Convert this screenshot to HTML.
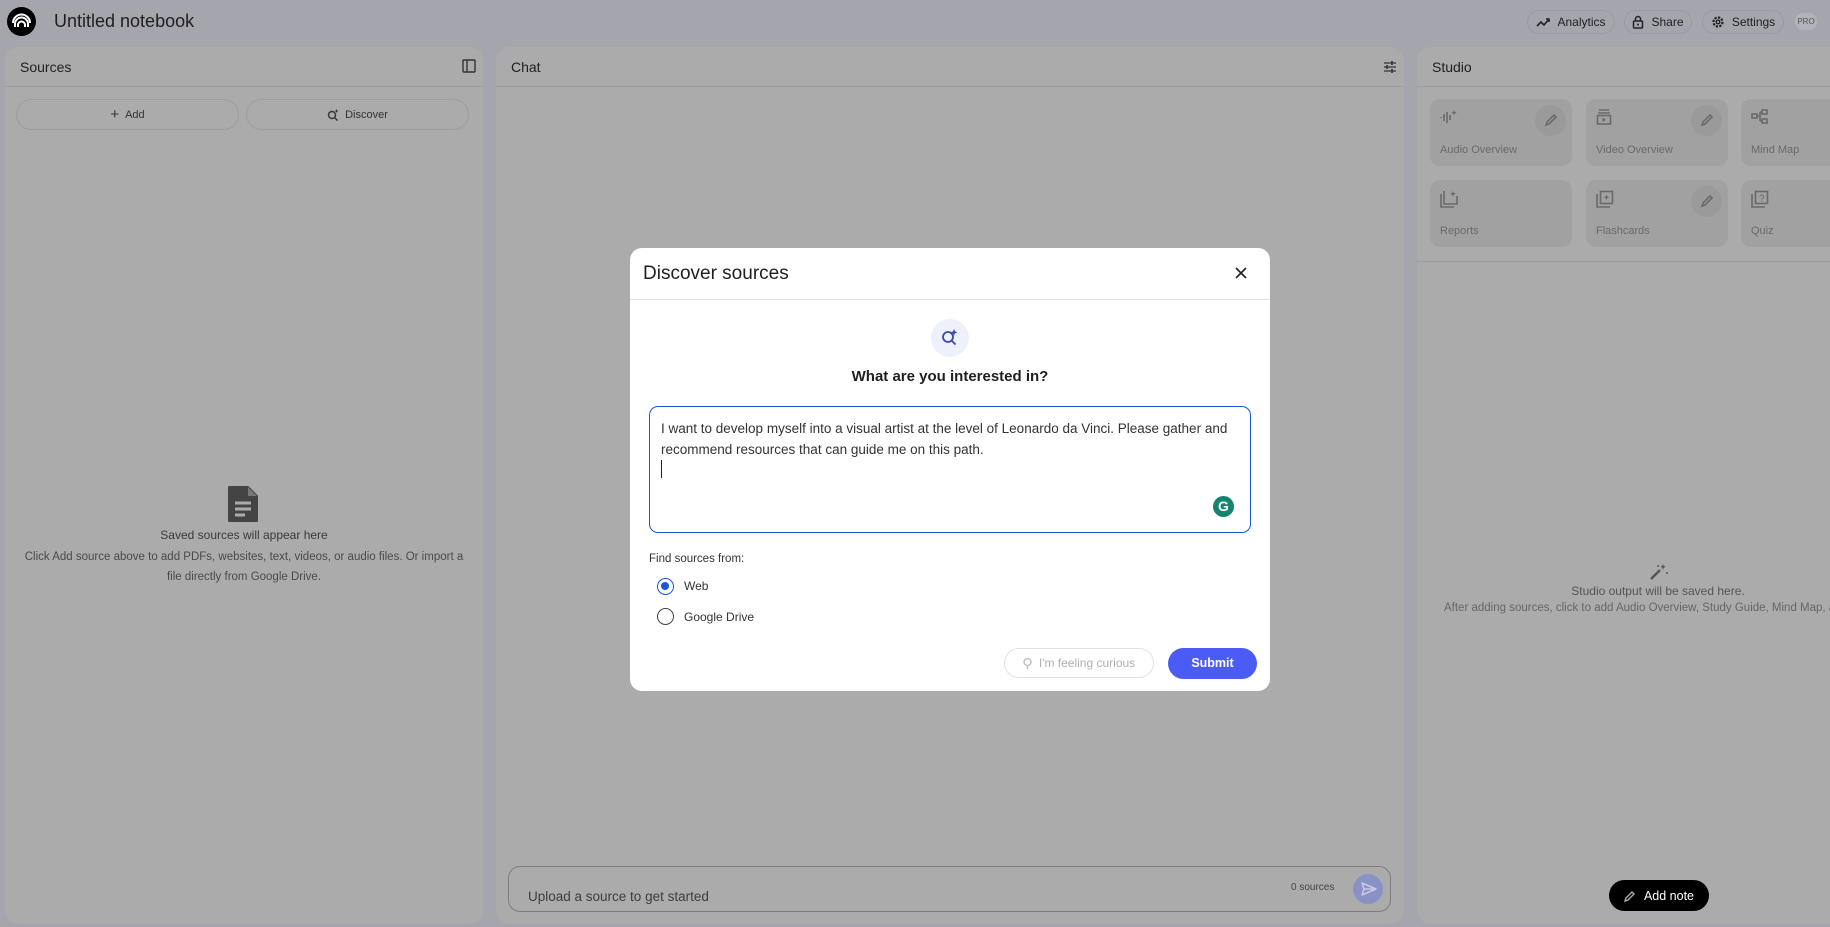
<!DOCTYPE html>
<html><head><meta charset="utf-8"><style>
*{box-sizing:border-box;margin:0;padding:0}
body{width:1830px;height:927px;background:#a5a5ae;font-family:"Liberation Sans",Arial,sans-serif;position:relative;overflow:hidden;color:#1f1f1f}
.abs{position:absolute}
.panel{position:absolute;top:47px;bottom:3px;background:#ababab;border-radius:14px}
.ph{position:absolute;left:0;right:0;top:0;height:40px;border-bottom:1px solid #9c9ca6;font-size:14px;padding:12px 0 0 15px;color:#1f1f1f}
.hbtn{position:absolute;top:10px;height:24px;border:1px solid #9a9aa3;border-radius:12px;font-size:12px;display:flex;align-items:center;justify-content:center;gap:7px;color:#1f1f1f}
.sbtn{position:absolute;top:52px;height:31px;border:1px solid #9e9e9e;border-radius:16px;font-size:11px;display:flex;align-items:center;justify-content:center;gap:6px;color:#333}
.tile{position:absolute;width:142px;height:67px;background:#a1a1a1;border-radius:10px}
.tile .lbl{position:absolute;left:10px;bottom:10px;font-size:11px;color:#6a6a6a}
.tile .ic{position:absolute;left:10px;top:10px}
.tile .pen{position:absolute;right:6px;top:6px;width:31px;height:31px;border-radius:50%;background:#9a9a9a}
.grey{fill:none;stroke:#6a6a6a;stroke-width:1.6}
</style></head><body>
<div class="abs" style="left:7px;top:7px;width:29px;height:29px;border-radius:50%;background:#000">
<svg width="29" height="29" viewBox="0 0 29 29"><g fill="none" stroke="#fff" stroke-width="2"><path d="M8 20v-3a6.5 6.5 0 0 1 13 0v3"/><path d="M6 16a8.5 8.5 0 0 1 17 0"/><path d="M11 20v-2a3.5 3.5 0 0 1 7 0v2"/></g></svg></div>
<div class="abs" style="left:54px;top:11px;font-size:18px;color:#1f1f1f">Untitled notebook</div>
<div class="hbtn" style="left:1527px;width:88px"><svg width="14" height="10"><path d="M1 9l4-4 3 3 5-6M10 2h3v3" fill="none" stroke="#222" stroke-width="1.6"/></svg>Analytics</div>
<div class="hbtn" style="left:1624px;width:68px"><svg width="12" height="14"><rect x="1.5" y="6" width="9" height="7" rx="1" fill="none" stroke="#222" stroke-width="1.5"/><path d="M3.5 6V4a2.5 2.5 0 0 1 5 0v2" fill="none" stroke="#222" stroke-width="1.5"/><circle cx="6" cy="9.5" r="1" fill="#222"/></svg>Share</div>
<div class="hbtn" style="left:1702px;width:82px"><svg width="14" height="14"><circle cx="7" cy="7" r="4.5" fill="none" stroke="#222" stroke-width="2.2" stroke-dasharray="2.2 1.3"/><circle cx="7" cy="7" r="1.8" fill="none" stroke="#222" stroke-width="1.4"/></svg>Settings</div>
<div class="abs" style="left:1795px;top:13px;width:22px;height:17px;border-radius:8px;background:#b2b2ba;font-size:8px;color:#555;text-align:center;line-height:17px">PRO</div>

<div class="panel" style="left:5px;width:478px">
<div class="ph">Sources</div>
<svg class="abs" style="left:457px;top:12px" width="14" height="14"><rect x="1" y="1" width="12" height="12" rx="1" fill="none" stroke="#333" stroke-width="1.4"/><path d="M5 1v12" stroke="#333" stroke-width="1.4"/></svg>
<div class="sbtn" style="left:11px;width:223px"><span style="font-size:15px">+</span>Add</div>
<div class="sbtn" style="left:241px;width:223px"><svg width="12" height="12"><circle cx="5" cy="6" r="3.5" fill="none" stroke="#333" stroke-width="1.4"/><path d="M7.5 8.5l3 3" stroke="#333" stroke-width="1.4"/><path d="M9.5 0l.6 1.4 1.4.6-1.4.6-.6 1.4-.6-1.4-1.4-.6 1.4-.6z" fill="#333"/></svg>Discover</div>
<svg class="abs" style="left:222px;top:438px" width="32" height="38"><path d="M2 2h19l9 9v25H2z" fill="#444" stroke="#444" stroke-width="2" stroke-linejoin="round"/><path d="M21 2v9h9" fill="#777"/><path d="M8 18h16M8 24h16M8 30h10" stroke="#ababab" stroke-width="3"/></svg>
<div class="abs" style="left:0;right:0;top:481px;text-align:center;font-size:12px;color:#3a3a3a">Saved sources will appear here</div>
<div class="abs" style="left:14px;right:14px;top:500px;text-align:center;font-size:11.5px;color:#4a4a4a;line-height:20px">Click Add source above to add PDFs, websites, text, videos, or audio files. Or import a file directly from Google Drive.</div>
</div>

<div class="panel" style="left:496px;width:908px">
<div class="ph">Chat</div>
<svg class="abs" style="left:887px;top:13px" width="14" height="14"><path d="M1 3h12M1 7h12M1 11h12" stroke="#333" stroke-width="1.3"/><path d="M9 1v4M4 5v4M9 9v4" stroke="#333" stroke-width="1.6"/></svg>
<div class="abs" style="left:12px;top:819px;width:883px;height:46px;border:1px solid #7d7d7d;border-radius:12px">
<div class="abs" style="left:19px;top:22px;font-size:13.5px;color:#3d3d3d">Upload a source to get started</div>
<div class="abs" style="left:782px;top:15px;font-size:10px;color:#444">0 sources</div>
<div class="abs" style="left:844px;top:7px;width:30px;height:30px;border-radius:50%;background:#8a91c4"><svg width="30" height="30"><path d="M9 9l14 6-14 6 2-6z" fill="none" stroke="#c9cbe6" stroke-width="1.5" stroke-linejoin="round"/><path d="M11 15h12" stroke="#c9cbe6" stroke-width="1.5"/></svg></div>
</div>
</div>

<div class="panel" style="left:1417px;width:440px">
<div class="ph">Studio</div>
<div class="tile" style="left:13px;top:52px"><svg class="ic" width="18" height="16"><path d="M1 8v1M4 5v7M7 3v11M10 6v5" stroke="#6a6a6a" stroke-width="1.6"/><path d="M14 1l.8 2 2 .8-2 .8-.8 2-.8-2-2-.8 2-.8z" fill="#6a6a6a"/></svg><div class="pen"><svg width="31" height="31"><path d="M11 20l1-3 7-7 2 2-7 7z" class="grey"/></svg></div><div class="lbl">Audio Overview</div></div>
<div class="tile" style="left:169px;top:52px"><svg class="ic" width="16" height="16"><path d="M3 1h10M2 4h12" class="grey"/><rect x="1.5" y="6.5" width="13" height="8.5" class="grey"/><path d="M6.5 8.5v4.5l3.5-2.2z" fill="#6a6a6a"/></svg><div class="pen"><svg width="31" height="31"><path d="M11 20l1-3 7-7 2 2-7 7z" class="grey"/></svg></div><div class="lbl">Video Overview</div></div>
<div class="tile" style="left:324px;top:52px"><svg class="ic" width="18" height="16"><rect x="1" y="5" width="5" height="4" class="grey"/><rect x="11" y="1" width="5" height="4" class="grey"/><rect x="11" y="10" width="5" height="4" class="grey"/><path d="M6 7h3M9 3v9M9 3h2M9 12h2" class="grey"/></svg><div class="lbl">Mind Map</div></div>
<div class="tile" style="left:13px;top:133px"><svg class="ic" width="18" height="18"><path d="M1 4v13h13" class="grey"/><path d="M4 1v13h13V6" class="grey"/><path d="M13 1l.8 2 2 .8-2 .8-.8 2-.8-2-2-.8 2-.8z" fill="#6a6a6a"/></svg><div class="lbl">Reports</div></div>
<div class="tile" style="left:169px;top:133px"><svg class="ic" width="18" height="18"><path d="M1 4v13h13" class="grey"/><rect x="4.5" y="1.5" width="12" height="12" class="grey"/><path d="M10.5 4.5l.8 2 2 .8-2 .8-.8 2-.8-2-2-.8 2-.8z" fill="#6a6a6a"/></svg><div class="pen"><svg width="31" height="31"><path d="M11 20l1-3 7-7 2 2-7 7z" class="grey"/></svg></div><div class="lbl">Flashcards</div></div>
<div class="tile" style="left:324px;top:133px"><svg class="ic" width="18" height="18"><path d="M1 4v13h13" class="grey"/><rect x="4.5" y="1.5" width="12" height="12" class="grey"/><text x="8" y="11.5" font-size="10" fill="#6a6a6a" font-family="Liberation Sans">?</text></svg><div class="lbl">Quiz</div></div>
<div class="abs" style="left:0;right:0;top:214px;border-top:1px solid #9c9ca6"></div>
<svg class="abs" style="left:232px;top:516px" width="20" height="18"><path d="M2 16l9-9" stroke="#555" stroke-width="2.4"/><path d="M14 1l.8 2 2 .8-2 .8-.8 2-.8-2-2-.8 2-.8z" fill="#555"/><circle cx="9" cy="3" r="1" fill="#555"/><circle cx="18" cy="10" r="1" fill="#555"/></svg>
<div class="abs" style="left:0;width:482px;top:537px;text-align:center;font-size:12px;color:#555">Studio output will be saved here.</div>
<div class="abs" style="left:27px;top:555px;white-space:nowrap;font-size:11.5px;color:#666">After adding sources, click to add Audio Overview, Study Guide, Mind Map, and more!</div>
<div class="abs" style="left:192px;top:833px;width:100px;height:31px;border-radius:16px;background:#000;color:#fff;font-size:12.5px;display:flex;align-items:center;justify-content:center;gap:8px"><svg width="12" height="12"><path d="M1 11l1-3 6-6 2 2-6 6z" fill="none" stroke="#aaa" stroke-width="1.4"/></svg>Add note</div>
</div>

<div class="abs" style="left:630px;top:248px;width:640px;height:443px;background:#fff;border-radius:12px;overflow:hidden">
<div class="abs" style="left:13px;top:15px;font-size:19px;color:#1f1f1f">Discover sources</div>
<svg class="abs" style="left:604px;top:18px" width="14" height="14"><path d="M2 2l10 10M12 2L2 12" stroke="#222" stroke-width="1.6"/></svg>
<div class="abs" style="left:0;right:0;top:51px;border-top:1px solid #dfe1e6"></div>
<div class="abs" style="left:301px;top:71px;width:38px;height:38px;border-radius:50%;background:#eef1fb"><svg width="38" height="38"><circle cx="17" cy="18" r="5" fill="none" stroke="#3b4aa8" stroke-width="1.8"/><path d="M20.5 21.5l4 4" stroke="#3b4aa8" stroke-width="1.8"/><path d="M23 10l1 2.4 2.4 1-2.4 1-1 2.4-1-2.4-2.4-1 2.4-1z" fill="#3b4aa8"/></svg></div>
<div class="abs" style="left:0;right:0;top:120px;text-align:center;font-size:15px;font-weight:bold;color:#1f1f1f">What are you interested in?</div>
<div class="abs" style="left:19px;top:158px;width:602px;height:127px;border:1.5px solid #1a56d6;border-radius:9px">
<div class="abs" style="left:11px;top:11px;width:570px;font-size:13.5px;line-height:21px;color:#333">I want to develop myself into a visual artist at the level of Leonardo da Vinci. Please gather and recommend resources that can guide me on this path.</div>
<div class="abs" style="left:11px;top:53px;width:1px;height:18px;background:#222"></div>
<div class="abs" style="left:563px;top:89px;width:21px;height:21px;border-radius:50%;background:#15846c;color:#fff;font-weight:bold;font-size:14px;text-align:center;line-height:21px">G</div>
</div>
<div class="abs" style="left:19px;top:305px;font-size:11.5px;color:#333">Find sources from:</div>
<div class="abs" style="left:27px;top:330px;width:17px;height:17px;border-radius:50%;border:1.6px solid #1a56d6"><div style="margin:3px;width:8px;height:8px;border-radius:50%;background:#1a56d6"></div></div>
<div class="abs" style="left:54px;top:331px;font-size:12px;color:#333">Web</div>
<div class="abs" style="left:27px;top:360px;width:17px;height:17px;border-radius:50%;border:1.6px solid #444"></div>
<div class="abs" style="left:54px;top:362px;font-size:12px;color:#333">Google Drive</div>
<div class="abs" style="left:374px;top:400px;width:150px;height:30px;border:1px solid #e2e2e2;border-radius:15px;font-size:12px;color:#b0b0b0;display:flex;align-items:center;justify-content:center;gap:6px"><svg width="10" height="14"><circle cx="4.5" cy="6" r="3.5" fill="none" stroke="#bbb" stroke-width="1.3"/><path d="M4.5 10v3" stroke="#bbb" stroke-width="1.3"/></svg>I'm feeling curious</div>
<div class="abs" style="left:538px;top:400px;width:89px;height:31px;border-radius:16px;background:#4a5cf5;color:#fff;font-size:12.5px;font-weight:bold;text-align:center;line-height:31px">Submit</div>
</div>
</body></html>
